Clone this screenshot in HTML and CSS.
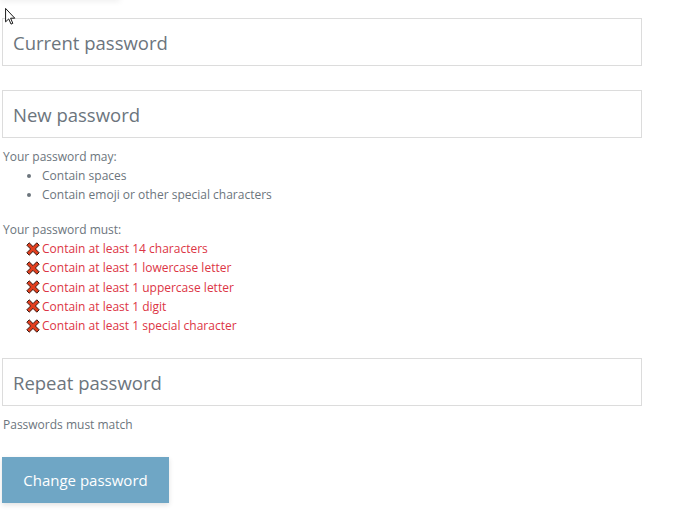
FILE: index.html
```html
<!DOCTYPE html>
<html>
<head>
<meta charset="utf-8">
<link rel="stylesheet" href="styles.css">
</head>
<body>
<div class="top-shadow"></div>
<svg class="cursor" width="12" height="19" viewBox="0 0 12 19"><path d="M0.5 0.5 L0.5 15.5 L4 12.2 L6.6 18 L8.6 17.1 L6.1 11.4 L10.8 11.4 Z" fill="#fff" stroke="#000" stroke-width="1"/></svg>
<form class="form">
  <input class="field" type="password" placeholder="Current password">
  <input class="field field-new" type="password" placeholder="New password">
  <div class="help">
    <div class="help-title">Your password may:</div>
    <ul class="may-list">
      <li>Contain spaces</li>
      <li>Contain emoji or other special characters</li>
    </ul>
    <div class="help-title must-title">Your password must:</div>
    <ul class="must-list">
      <li><svg class="x" viewBox="0 0 14 14" width="14" height="14"><path d="M0.8 3.2 L3.2 0.8 L7 4.6 L10.8 0.8 L13.2 3.2 L9.4 7 L13.2 10.8 L10.8 13.2 L7 9.4 L3.2 13.2 L0.8 10.8 L4.6 7 Z" fill="#e23e1e" stroke="#3b1c14" stroke-width="1" stroke-linejoin="round"/></svg>Contain at least 14 characters</li>
      <li><svg class="x" viewBox="0 0 14 14" width="14" height="14"><path d="M0.8 3.2 L3.2 0.8 L7 4.6 L10.8 0.8 L13.2 3.2 L9.4 7 L13.2 10.8 L10.8 13.2 L7 9.4 L3.2 13.2 L0.8 10.8 L4.6 7 Z" fill="#e23e1e" stroke="#3b1c14" stroke-width="1" stroke-linejoin="round"/></svg>Contain at least 1 lowercase letter</li>
      <li><svg class="x" viewBox="0 0 14 14" width="14" height="14"><path d="M0.8 3.2 L3.2 0.8 L7 4.6 L10.8 0.8 L13.2 3.2 L9.4 7 L13.2 10.8 L10.8 13.2 L7 9.4 L3.2 13.2 L0.8 10.8 L4.6 7 Z" fill="#e23e1e" stroke="#3b1c14" stroke-width="1" stroke-linejoin="round"/></svg>Contain at least 1 uppercase letter</li>
      <li><svg class="x" viewBox="0 0 14 14" width="14" height="14"><path d="M0.8 3.2 L3.2 0.8 L7 4.6 L10.8 0.8 L13.2 3.2 L9.4 7 L13.2 10.8 L10.8 13.2 L7 9.4 L3.2 13.2 L0.8 10.8 L4.6 7 Z" fill="#e23e1e" stroke="#3b1c14" stroke-width="1" stroke-linejoin="round"/></svg>Contain at least 1 digit</li>
      <li><svg class="x" viewBox="0 0 14 14" width="14" height="14"><path d="M0.8 3.2 L3.2 0.8 L7 4.6 L10.8 0.8 L13.2 3.2 L9.4 7 L13.2 10.8 L10.8 13.2 L7 9.4 L3.2 13.2 L0.8 10.8 L4.6 7 Z" fill="#e23e1e" stroke="#3b1c14" stroke-width="1" stroke-linejoin="round"/></svg>Contain at least 1 special character</li>
    </ul>
  </div>
  <input class="field field-repeat" type="password" placeholder="Repeat password">
  <div class="help match">Passwords must match</div>
  <button class="submit" type="button">Change password</button>
</form>
</body>
</html>
```
FILE: styles.css
```css
html, body {
  margin: 0;
  padding: 0;
  background: #fff;
}
body {
  font-family: "Open Sans", "Noto Sans", sans-serif;
  color: #555;
  position: relative;
  width: 677px;
  height: 510px;
  overflow: hidden;
}
.top-shadow {
  position: absolute;
  left: 0;
  top: -6px;
  width: 120px;
  height: 6px;
  box-shadow: 0 1px 6px rgba(0,0,0,0.08);
}
.cursor {
  position: absolute;
  left: 5px;
  top: 8px;
  width: 11px;
  height: 17px;
}
.form {
  display: flex;
  flex-direction: column;
  align-items: flex-start;
  padding: 18px 0 0 2px;
  width: 640px;
}
.field {
  box-sizing: border-box;
  width: 640px;
  height: 48px;
  margin: 0;
  border: 1px solid #dcdcdc;
  padding: 0 10px;
  font-family: inherit;
  font-size: 18.5px;
  color: #555;
  outline: none;
}
.field::placeholder {
  color: #6c757d;
}
.field-new {
  margin-top: 24px;
}
.help {
  font-size: 12px;
  line-height: 19px;
  color: #6c757d;
  margin-left: 1px;
}
.help-title {
  margin-top: 9px;
}
.must-title {
  margin-top: 16px;
}
.may-list {
  margin: 0;
  padding-left: 39px;
}
.must-list {
  margin: 0;
  padding-left: 23px;
  list-style: none;
  color: #dc3545;
}
.must-list li {
  display: flex;
  align-items: center;
  height: 19.25px;
}
.x {
  margin-right: 2px;
}
.field-repeat {
  margin-top: 23px;
}
.match {
  margin-top: 9px;
}
.submit {
  margin-top: 23px;
  height: 46px;
  width: 167px;
  border: none;
  background: #6fa6c5;
  color: #fff;
  font-family: inherit;
  font-size: 15px;
  box-shadow: 0 2px 5px rgba(0,0,0,0.12);
  padding: 0;
}
```
